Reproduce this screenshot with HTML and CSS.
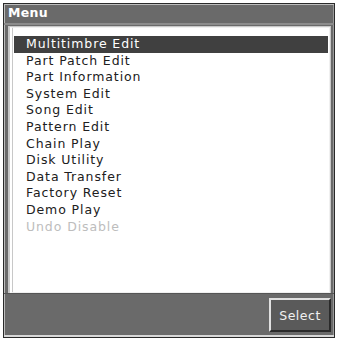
FILE: index.html
```html
<!DOCTYPE html>
<html>
<head>
<meta charset="utf-8">
<link rel="stylesheet" href="styles.css">
</head>
<body>
<div class="window">
  <div class="titlebar">Menu</div>
  <div class="panel">
    <ul class="list">
      <li class="item selected">Multitimbre Edit</li>
      <li class="item">Part Patch Edit</li>
      <li class="item">Part Information</li>
      <li class="item">System Edit</li>
      <li class="item">Song Edit</li>
      <li class="item">Pattern Edit</li>
      <li class="item">Chain Play</li>
      <li class="item">Disk Utility</li>
      <li class="item">Data Transfer</li>
      <li class="item">Factory Reset</li>
      <li class="item">Demo Play</li>
      <li class="item disabled">Undo Disable</li>
    </ul>
  </div>
  <div class="footer">
    <button class="btn">Select</button>
  </div>
</div>
</body>
</html>
```
FILE: styles.css
```css
html, body {
  margin: 0;
  padding: 0;
  background: #ffffff;
}
body {
  width: 339px;
  height: 342px;
  font-family: "DejaVu Sans", sans-serif;
}
.window {
  margin: 3px 4px 4px 3px;
  height: 335px;
  box-sizing: border-box;
  border: 1px solid #2a2a2a;
  background: #6a6a6a;
  display: flex;
  flex-direction: column;
  box-shadow: inset 1px 1px 0 #bdbdbd, inset -1px -1px 0 #9a9a9a;
}
.titlebar {
  height: 19px;
  line-height: 18px;
  padding-left: 4px;
  color: #ffffff;
  font-weight: bold;
  font-size: 12.5px;
  letter-spacing: 0.3px;
  border-bottom: 2px solid #8c8c8c;
}
.panel {
  margin: 2px 4px 0 5px;
  border: 1px solid #f0f0f0;
  border-left: 4px double #c8c8c8;
  background: #ffffff;
  height: 266px;
  box-sizing: border-box;
  padding: 8px 1px 0 1px;
  box-shadow: 0 0 0 1px #c8c8c8;
}
.list {
  list-style: none;
  margin: 0;
  padding: 0;
}
.item {
  height: 16.6px;
  line-height: 16.6px;
  padding-left: 12px;
  font-size: 12.5px;
  color: #202020;
  letter-spacing: 0.9px;
}
.item.selected {
  background: #404040;
  color: #ffffff;
}
.item.disabled {
  color: #bdbdbd;
}
.footer {
  flex: 1;
  display: flex;
  justify-content: flex-end;
  align-items: center;
  padding-right: 3px;
  padding-top: 1px;
  border-top: 1px solid #555;
  border-bottom: 2px solid #d8d8d8;
}
.btn {
  width: 62px;
  height: 34px;
  background: #5a5a5a;
  color: #f0f0f0;
  font-family: "DejaVu Sans", sans-serif;
  font-size: 12.5px;
  letter-spacing: 0.5px;
  border: 2px solid;
  border-color: #e0e0e0 #2a2a2a #2a2a2a #e0e0e0;
  padding: 0;
}
```
